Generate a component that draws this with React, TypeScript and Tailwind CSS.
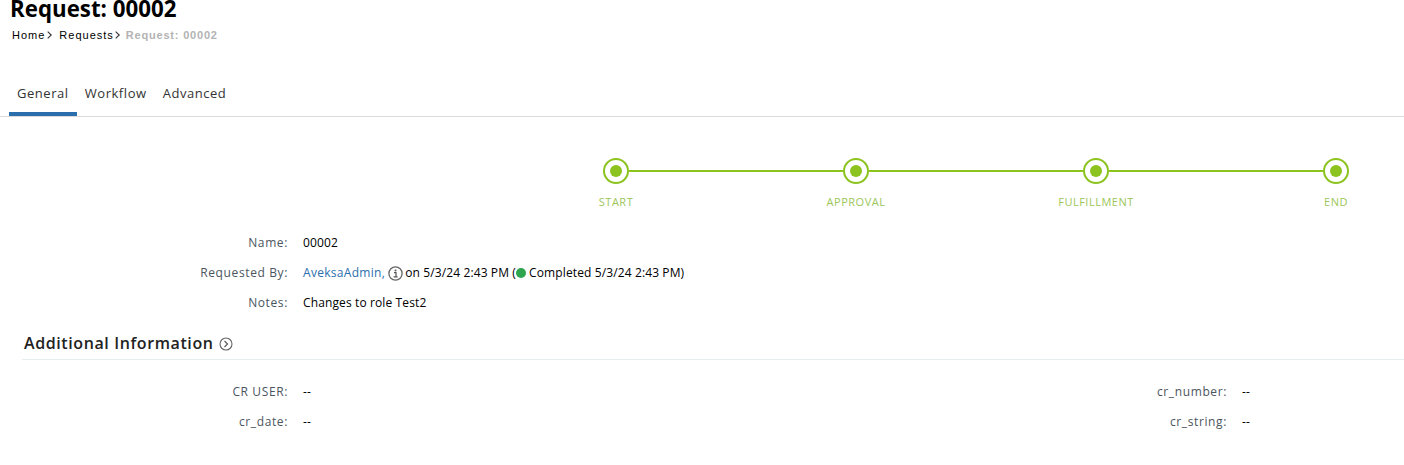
const steps = ['START', 'APPROVAL', 'FULFILLMENT', 'END'];

function Row({ label, children }: { label: string; children: React.ReactNode }) {
  return (
    <div className="flex h-[30px] items-center">
      <div className="w-[288px] text-right text-[#4a5560] tracking-[0.62px]">{label}</div>
      <div className="ml-[15px] flex items-center text-black tracking-[0.12px]">{children}</div>
    </div>
  );
}

function Tab({ label, active }: { label: string; active?: boolean }) {
  return (
    <div className={`box-border h-[38px] border-b-4 px-2 pt-[5px] text-[13px] leading-[20px] tracking-[0.55px] text-[#333] ${active ? 'border-[#2a6ead]' : 'border-transparent'}`}>
      {label}
    </div>
  );
}

function Chevron({ className }: { className: string }) {
  return (
    <svg className={className} width="5" height="8" viewBox="0 0 5 8" fill="none">
      <path d="M0.7 0.7L4.2 4L0.7 7.3" stroke="#333" strokeWidth="1.1" />
    </svg>
  );
}

export default function App() {
  return (
    <div className="h-[465px] w-[1404px] overflow-hidden bg-white pt-px font-['Open_Sans',sans-serif] text-[12px]">
      <h1 className="ml-[10px] mt-[-5px] text-[22.3px] font-bold leading-[26px] text-black">Request: 00002</h1>
      <div className="ml-3 mt-[6px] flex h-[14px] items-center font-['Liberation_Sans',sans-serif] text-[11px] tracking-[1px] text-black">
        <span>Home</span>
        <Chevron className="ml-[2px] mr-[7px]" />
        <span>Requests</span>
        <Chevron className="ml-[1px] mr-[6px]" />
        <span className="font-bold tracking-[0.8px] text-[#b3b3b3]">Request: 00002</span>
      </div>

      <div className="mt-[36px] flex border-b border-[#d9d9d9] pl-[9px]">
        <Tab label="General" active />
        <Tab label="Workflow" />
        <Tab label="Advanced" />
      </div>

      <div className="ml-[603px] mt-[41px] flex w-[746px]">
        {steps.map((s, i) => (
          <div key={s} className={`flex ${i < 3 ? 'flex-1' : ''}`}>
            <div className="flex w-[26px] flex-col items-center">
              <div className="flex h-[26px] w-[26px] items-center justify-center rounded-full border-2 border-[#8cc31f]">
                <div className="h-3 w-3 rounded-full bg-[#8cc31f]" />
              </div>
              <span className="mt-[10px] whitespace-nowrap text-[11px] tracking-[0.5px] text-[#9cc65a]">{s}</span>
            </div>
            {i < 3 && <div className="mt-[12px] h-[2px] flex-1 bg-[#8cc31f]" />}
          </div>
        ))}
      </div>

      <div className="mt-[17px]">
        <Row label="Name:">00002</Row>
        <Row label="Requested By:">
          <span className="tracking-[0.3px] text-[#2a6ead]">AveksaAdmin,</span>
          <svg className="ml-[3px] mr-[2px] mt-[2px]" width="15" height="15" viewBox="0 0 15 15" fill="none">
            <circle cx="7.5" cy="7.5" r="6.6" stroke="#666" strokeWidth="1.3" />
            <circle cx="7.5" cy="4.4" r="1" fill="#555" />
            <path d="M6 6.6h2v4M5.6 10.9h4" stroke="#555" strokeWidth="1.2" />
          </svg>
          <span>on 5/3/24 2:43 PM (</span>
          <span className="h-[10px] w-[10px] rounded-full bg-[#2ea44f]" />
          <span className="ml-[3px]">Completed 5/3/24 2:43 PM)</span>
        </Row>
        <Row label="Notes:">Changes to role Test2</Row>
      </div>

      <div className="ml-[22px] mt-[7px] flex h-[35px] items-center gap-[5px] border-b border-[#e6eef0] pl-[2px] pt-[3px] text-[16px] font-semibold tracking-[0.6px] text-[#222]">
        <span>Additional Information</span>
        <svg width="14" height="14" viewBox="0 0 14 14" fill="none" className="mt-[2px]">
          <circle cx="7" cy="7" r="6" stroke="#666" strokeWidth="1.1" />
          <path d="M5.5 4l3 3-3 3" stroke="#555" strokeWidth="1.1" />
        </svg>
      </div>

      <div className="mt-[17px] grid grid-cols-[939px_1fr]">
        <div>
          <Row label="CR USER:">--</Row>
          <Row label="cr_date:">--</Row>
        </div>
        <div>
          <Row label="cr_number:">--</Row>
          <Row label="cr_string:">--</Row>
        </div>
      </div>
    </div>
  );
}
